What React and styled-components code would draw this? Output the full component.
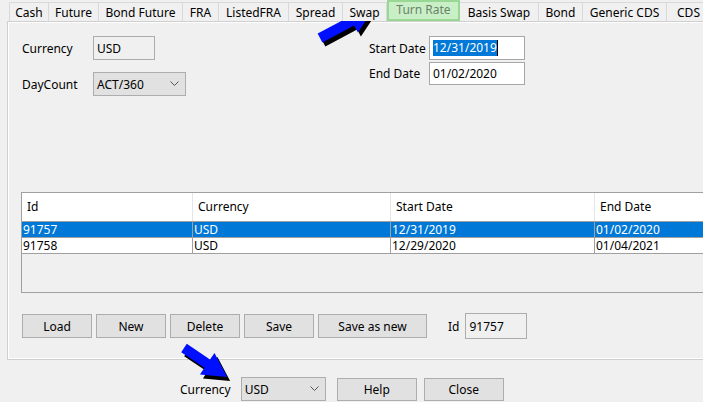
import React from "react";
import styled, { createGlobalStyle } from "styled-components";

const GlobalStyle = createGlobalStyle`
  html, body {
    margin: 0;
    padding: 0;
    background: #f0f0f0;
  }
  body {
    font-family: "Noto Sans", "Liberation Sans", sans-serif;
    font-size: 12px;
    color: #000;
  }
`;

const WindowUI = styled.div`
  position: relative;
  width: 703px;
  height: 402px;
  overflow: hidden;
  background: #f0f0f0;
`;

const TabStripUI = styled.div`
  display: flex;
  align-items: flex-end;
  height: 21px;
  padding-left: 9px;
  white-space: nowrap;
`;

const TabUI = styled.div`
  flex: none;
  box-sizing: border-box;
  width: ${(p) => p.w}px;
  height: ${(p) => (p.active ? 21 : 19)}px;
  display: flex;
  align-items: center;
  justify-content: center;
  border: ${(p) => (p.active ? "2px solid #98d894" : "1px solid #d9d9d9")};
  border-bottom: ${(p) => (p.active ? "2px solid #98d894" : "none")};
  border-left: ${(p) => (p.active ? "2px solid #98d894" : p.first ? "1px solid #d9d9d9" : "none")};
  background: ${(p) => (p.active ? "#c9efc6" : "#f0f0f0")};
  color: ${(p) => (p.active ? "#6b836b" : "#000")};
  padding-bottom: ${(p) => (p.active ? 2 : 0)}px;
  position: relative;
  z-index: ${(p) => (p.active ? 2 : 1)};
`;

const PanelUI = styled.div`
  box-sizing: border-box;
  margin-left: 7px;
  width: 720px;
  height: 339px;
  border: 1px solid #cfcfcf;
  border-right: none;
  box-shadow: inset 1px 1px 0 #fff, inset 0 -1px 0 #fff;
  display: flex;
  flex-direction: column;
`;

const FormUI = styled.div`
  display: flex;
  padding: 14px 0 0 14px;
  height: 82px;
`;

const FieldGridUI = styled.div`
  display: grid;
  grid-template-columns: ${(p) => p.cols};
  grid-auto-rows: 24px;
  row-gap: ${(p) => p.gap}px;
  align-items: center;
  align-content: start;
  margin-left: ${(p) => p.offset || 0}px;
`;

const LabelUI = styled.span`
  white-space: nowrap;
`;

const TextBoxUI = styled.div`
  box-sizing: border-box;
  width: ${(p) => p.w}px;
  height: ${(p) => p.h || 24}px;
  border: 1px solid ${(p) => (p.readOnly ? "#adadad" : "#a6a6a6")};
  background: ${(p) => (p.readOnly ? "#f0f0f0" : "#fff")};
  display: flex;
  align-items: center;
  padding-left: 3px;
  font-size: 12px;
`;

const SelectedTextUI = styled.span`
  background: #0078d7;
  color: #fff;
  border-right: 1px solid #000;
  line-height: 16px;
`;

const SelectUI = styled.div`
  box-sizing: border-box;
  width: ${(p) => p.w}px;
  height: 24px;
  border: 1px solid #adadad;
  background: #e1e1e1;
  display: flex;
  align-items: center;
  justify-content: space-between;
  padding: 0 6px 0 3px;
`;

const ChevronUI = styled.svg`
  width: 9px;
  height: 6px;
`;

const TableUI = styled.div`
  box-sizing: border-box;
  margin: 74px 0 0 13px;
  width: 720px;
  height: 101px;
  border: 1px solid #a0a0a0;
  border-right: none;
  background: #f0f0f0;
`;

const TableRowUI = styled.div`
  display: grid;
  grid-template-columns: 171px 198px 204px 1fr;
  height: ${(p) => (p.header ? 28 : 15)}px;
  border-bottom: 1px solid #a0a0a0;
  background: ${(p) => (p.selected ? "#0078d7" : "#fff")};
  color: ${(p) => (p.selected ? "#fff" : "#000")};
`;

const CellUI = styled.div`
  box-sizing: border-box;
  display: flex;
  align-items: center;
  padding-left: ${(p) => (p.header ? 5 : 1)}px;
  padding-bottom: ${(p) => (p.header ? 2 : 0)}px;
  border-right: 1px solid ${(p) => (p.header ? "#e5e5e5" : "#a0a0a0")};
  line-height: 15px;
  white-space: nowrap;
  &:last-child {
    border-right: none;
  }
`;

const ButtonRowUI = styled.div`
  display: flex;
  align-items: center;
  gap: 4px;
  margin: 20px 0 0 14px;
`;

const ButtonUI = styled.div`
  box-sizing: border-box;
  width: ${(p) => p.w}px;
  height: ${(p) => p.h || 24}px;
  border: 1px solid #adadad;
  background: #e1e1e1;
  display: flex;
  align-items: center;
  justify-content: center;
`;

const IdFieldUI = styled.div`
  display: flex;
  align-items: center;
  gap: 6px;
  margin-left: 17px;
`;

const BottomBarUI = styled.div`
  display: flex;
  align-items: center;
  padding: 17px 0 0 180px;
`;

const BottomGroupUI = styled.div`
  display: flex;
  align-items: center;
  gap: ${(p) => p.gap}px;
  margin-left: ${(p) => p.offset || 0}px;
`;

const OverlayUI = styled.svg`
  position: absolute;
  left: 0;
  top: 0;
  width: 703px;
  height: 402px;
  pointer-events: none;
`;

const tabs = [
  ["Cash", 40],
  ["Future", 50],
  ["Bond Future", 84],
  ["FRA", 36],
  ["ListedFRA", 70],
  ["Spread", 54],
  ["Swap", 44],
  ["Turn Rate", 73],
  ["Basis Swap", 79],
  ["Bond", 44],
  ["Generic CDS", 84],
  ["CDS", 44],
];

const rows = [
  { id: "91757", currency: "USD", start: "12/31/2019", end: "01/02/2020", selected: true },
  { id: "91758", currency: "USD", start: "12/29/2020", end: "01/04/2021" },
];

function Chevron() {
  return (
    <ChevronUI viewBox="0 0 9 6">
      <polyline points="0.5,0.5 4.5,4.5 8.5,0.5" fill="none" stroke="#555" strokeWidth="1" />
    </ChevronUI>
  );
}

// block arrow pointing along +x, rotated into place
function Arrow({ x, y, angle, len }) {
  const h = len - 24;
  const pts = `0,-5 ${h},-5 ${h},-13 ${len},0 ${h},13 ${h},5 0,5`;
  return (
    <g>
      <polygon points={pts} fill="#000" transform={`translate(${x + 3} ${y + 4}) rotate(${angle})`} />
      <polygon points={pts} fill="#0010ff" transform={`translate(${x} ${y}) rotate(${angle})`} />
    </g>
  );
}

export default function App() {
  return (
    <>
      <GlobalStyle />
      <WindowUI>
        <TabStripUI>
          {tabs.map(([name, w], i) => (
            <TabUI key={name} w={w} first={i === 0} active={name === "Turn Rate"}>
              {name}
            </TabUI>
          ))}
        </TabStripUI>

        <PanelUI>
          <FormUI>
            <FieldGridUI cols="71px 93px" gap={12}>
              <LabelUI>Currency</LabelUI>
              <TextBoxUI w={62} readOnly>USD</TextBoxUI>
              <LabelUI>DayCount</LabelUI>
              <SelectUI w={93}>
                ACT/360
                <Chevron />
              </SelectUI>
            </FieldGridUI>
            <FieldGridUI cols="60px 96px" gap={1} offset={183}>
              <LabelUI>Start Date</LabelUI>
              <TextBoxUI w={96}>
                <SelectedTextUI>12/31/2019</SelectedTextUI>
              </TextBoxUI>
              <LabelUI>End Date</LabelUI>
              <TextBoxUI w={96} h={23}>01/02/2020</TextBoxUI>
            </FieldGridUI>
          </FormUI>

          <TableUI>
            <TableRowUI header>
              <CellUI header>Id</CellUI>
              <CellUI header>Currency</CellUI>
              <CellUI header>Start Date</CellUI>
              <CellUI header>End Date</CellUI>
            </TableRowUI>
            {rows.map((r) => (
              <TableRowUI key={r.id} selected={r.selected}>
                <CellUI>{r.id}</CellUI>
                <CellUI>{r.currency}</CellUI>
                <CellUI>{r.start}</CellUI>
                <CellUI>{r.end}</CellUI>
              </TableRowUI>
            ))}
          </TableUI>

          <ButtonRowUI>
            <ButtonUI w={70}>Load</ButtonUI>
            <ButtonUI w={70}>New</ButtonUI>
            <ButtonUI w={70}>Delete</ButtonUI>
            <ButtonUI w={70}>Save</ButtonUI>
            <ButtonUI w={109}>Save as new</ButtonUI>
            <IdFieldUI>
              <LabelUI>Id</LabelUI>
              <TextBoxUI w={62} h={26} readOnly>91757</TextBoxUI>
            </IdFieldUI>
          </ButtonRowUI>
        </PanelUI>

        <BottomBarUI>
          <BottomGroupUI gap={10}>
            <LabelUI>Currency</LabelUI>
            <SelectUI w={85}>
              USD
              <Chevron />
            </SelectUI>
          </BottomGroupUI>
          <BottomGroupUI gap={7} offset={11}>
            <ButtonUI w={80} h={23}>Help</ButtonUI>
            <ButtonUI w={80} h={23}>Close</ButtonUI>
          </BottomGroupUI>
        </BottomBarUI>

        <OverlayUI viewBox="0 0 703 402">
          <Arrow x={320} y={38} angle={-28} len={60} />
          <Arrow x={184} y={348} angle={34} len={52} />
        </OverlayUI>
      </WindowUI>
    </>
  );
}
